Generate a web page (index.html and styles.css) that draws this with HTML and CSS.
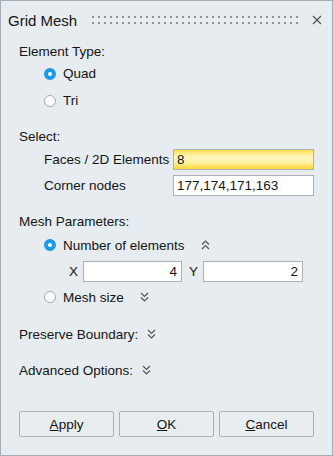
FILE: index.html
```html
<!DOCTYPE html>
<html lang="en">
<head>
  <meta charset="UTF-8">
  <title>Grid Mesh</title>
  <link rel="stylesheet" href="styles.css">
</head>
<body>
  <div class="dialog">
    <div class="titlebar">
      <span class="title">Grid Mesh</span>
      <span class="grip"></span>
      <svg class="close" width="10" height="10" viewBox="0 0 10 10">
        <path d="M1 1 L9 9 M9 1 L1 9" stroke="#555" stroke-width="1.2" fill="none"/>
      </svg>
    </div>

    <div class="content">
      <!-- Element type -->
      <div class="label-row first">Element Type:</div>
      <div class="radio-row tall">
        <span class="radio checked"></span><span>Quad</span>
      </div>
      <div class="radio-row tall">
        <span class="radio"></span><span>Tri</span>
      </div>

      <!-- Selection -->
      <div class="label-row select">Select:</div>
      <div class="field-row faces">
        <span class="field-label">Faces / 2D Elements</span>
        <input class="field active" type="text" value="8">
      </div>
      <div class="field-row">
        <span class="field-label">Corner nodes</span>
        <input class="field" type="text" value="177,174,171,163">
      </div>

      <!-- Mesh parameters -->
      <div class="label-row section">Mesh Parameters:</div>
      <div class="radio-row number">
        <span class="radio checked"></span><span>Number of elements</span>
        <svg class="chevron wide" width="9" height="10" viewBox="0 0 9 10">
          <path d="M1 4.5 L4.5 1 L8 4.5 M1 9 L4.5 5.5 L8 9" stroke="#555" stroke-width="1.2" fill="none"/>
        </svg>
      </div>
      <div class="xy-row">
        <span class="axis">X</span>
        <input class="field num" type="text" value="4">
        <span class="axis y">Y</span>
        <input class="field num wide" type="text" value="2">
      </div>
      <div class="radio-row">
        <span class="radio"></span><span>Mesh size</span>
        <svg class="chevron wide" width="9" height="10" viewBox="0 0 9 10">
          <path d="M1 1 L4.5 4.5 L8 1 M1 5.5 L4.5 9 L8 5.5" stroke="#555" stroke-width="1.2" fill="none"/>
        </svg>
      </div>

      <div class="label-row preserve">Preserve Boundary:
        <svg class="chevron" width="9" height="10" viewBox="0 0 9 10">
          <path d="M1 1 L4.5 4.5 L8 1 M1 5.5 L4.5 9 L8 5.5" stroke="#555" stroke-width="1.2" fill="none"/>
        </svg>
      </div>
      <div class="label-row advanced">Advanced Options:
        <svg class="chevron" width="9" height="10" viewBox="0 0 9 10">
          <path d="M1 1 L4.5 4.5 L8 1 M1 5.5 L4.5 9 L8 5.5" stroke="#555" stroke-width="1.2" fill="none"/>
        </svg>
      </div>

      <div class="buttons">
        <button><u>A</u>pply</button>
        <button><u>O</u>K</button>
        <button><u>C</u>ancel</button>
      </div>
    </div>
  </div>
</body>
</html>
```

FILE: styles.css
```css
:root {
  --bg: #e6ecf0;
  --frame: #a4adb4;
  --field-border: #aab2b8;
  --text: #141414;
  --accent: #1a9be3;
}

* {
  margin: 0;
  padding: 0;
  box-sizing: border-box;
}

body {
  font-family: "Liberation Sans", Arial, sans-serif;
  font-size: 13.5px;
  color: var(--text);
  background-color: var(--bg);
}

.dialog {
  width: 333px;
  height: 456px;
  border: 1px solid var(--frame);
  background-color: var(--bg);
}

/* Title bar */
.titlebar {
  display: flex;
  align-items: center;
  height: 38px;
  padding: 0 10px 0 7px;
}

.title {
  font-size: 15px;
}

.grip {
  flex: 1;
  height: 12px;
  margin: 0 11px 0 15px;
  background-image: radial-gradient(circle, #8c9398 0.9px, transparent 1.3px);
  background-size: 6px 6px;
  background-position: -2px 0;
}

.close {
  display: block;
}

/* Content */
.content {
  padding: 0 18px 0 18px;
}

.label-row {
  display: flex;
  align-items: center;
  height: 18px;
}

.label-row.first { margin-top: 3px; }
.label-row.select { margin-top: 13px; }
.label-row.section { margin-top: 14px; }
.label-row.preserve { margin-top: 15px; }
.label-row.advanced { margin-top: 18px; }

.radio-row {
  display: flex;
  align-items: center;
  height: 26px;
  padding-left: 25px;
}

.radio-row.tall { height: 27px; }
.radio-row.number { margin-top: 2px; }

.radio {
  width: 12px;
  height: 12px;
  border-radius: 50%;
  border: 1px solid #a2a8ad;
  background-color: #fff;
  margin-right: 7px;
  flex-shrink: 0;
}

.radio.checked {
  border: 4px solid var(--accent);
  background-color: #fff;
}

.chevron {
  display: block;
  margin-left: 9px;
}

.chevron.wide {
  margin-left: 16px;
}

/* Fields */
.field-row {
  display: flex;
  align-items: center;
  height: 26px;
  padding-left: 25px;
}

.field-row.faces { margin-top: 1px; }

.field-label {
  width: 130px;
}

.field {
  width: 141px;
  height: 21px;
  border: 1px solid var(--field-border);
  background-color: #fff;
  padding: 0 3px;
  font-family: inherit;
  font-size: 13.5px;
  color: var(--text);
  outline: none;
}

.field.active {
  background: linear-gradient(#ffdf4a 0%, #fff6bd 35%, #fff3a8 65%, #ffd531 100%);
}

.xy-row {
  display: flex;
  align-items: center;
  height: 26px;
  padding-left: 50px;
}

.axis {
  width: 14px;
}

.axis.y {
  margin-left: 7px;
}

.field.num {
  width: 99px;
  text-align: right;
  padding-right: 4px;
}

.field.num.wide {
  width: 100px;
}

/* Buttons */
.buttons {
  display: grid;
  grid-template-columns: 95px 95px 95px;
  gap: 5px;
  margin-top: 32px;
}

.buttons button {
  height: 26px;
  border: 1px solid #a8b0b6;
  border-radius: 2px;
  background-color: #e8edf0;
  font-family: inherit;
  font-size: 13.5px;
  color: var(--text);
}
```
